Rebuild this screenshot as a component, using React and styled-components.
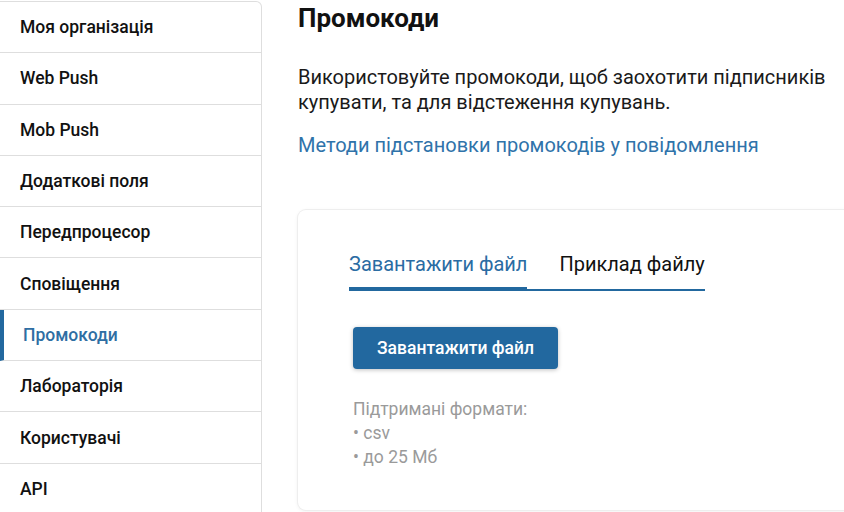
import React, { useState } from "react";
import styled, { createGlobalStyle } from "styled-components";

const GlobalStyle = createGlobalStyle`
  html, body {
    margin: 0;
    padding: 0;
    background: #fff;
  }
  body {
    font-family: Roboto, "Noto Sans", "Liberation Sans", sans-serif;
    color: #111;
  }
`;

const menuItems = [
  "Моя організація",
  "Web Push",
  "Mob Push",
  "Додаткові поля",
  "Передпроцесор",
  "Сповіщення",
  "Промокоди",
  "Лабораторія",
  "Користувачі",
  "API",
];

const App = () => {
  const [tab, setTab] = useState(0);

  return (
    <>
      <GlobalStyle />
      <Page>
        <Sidebar>
          {menuItems.map((item) => (
            <MenuItem key={item} active={item === "Промокоди"}>
              {item}
            </MenuItem>
          ))}
        </Sidebar>
        <Main>
          <Title>Промокоди</Title>
          <Description>
            Використовуйте промокоди, щоб заохотити підписників купувати, та
            для відстеження купувань.
          </Description>
          <DocLink href="#">Методи підстановки промокодів у повідомлення</DocLink>
          <Card>
            <TabList>
              <Tab active={tab === 0} onClick={() => setTab(0)}>
                Завантажити файл
              </Tab>
              <Tab active={tab === 1} onClick={() => setTab(1)}>
                Приклад файлу
              </Tab>
            </TabList>
            <Panel>
              <UploadButton>Завантажити файл</UploadButton>
              <Formats>
                Підтримані формати:
                <br />• csv
                <br />• до 25 Мб
              </Formats>
            </Panel>
          </Card>
        </Main>
      </Page>
    </>
  );
};

const Page = styled.div`
  display: flex;
  align-items: flex-start;
  width: 844px;
  height: 512px;
  overflow: hidden;
`;

const Sidebar = styled.nav`
  flex: 0 0 262px;
  box-sizing: border-box;
  margin-top: 1px;
  border: 1px solid #dedede;
  border-left: none;
  border-radius: 0 6px 0 0;
  display: flex;
  flex-direction: column;
`;

const MenuItem = styled.a`
  display: flex;
  align-items: center;
  box-sizing: border-box;
  height: 51.3px;
  padding-left: ${(p) => (p.active ? "19px" : "20px")};
  border-left: ${(p) => (p.active ? "4px solid #22689f" : "none")};
  border-bottom: 1px solid #dedede;
  font-size: 17.5px;
  font-weight: 500;
  color: ${(p) => (p.active ? "#2f6ea3" : "#111")};
  cursor: pointer;
`;

const Main = styled.main`
  flex: 1;
  padding: 3px 0 0 36px;
  min-width: 0;
`;

const Title = styled.h1`
  margin: 0;
  font-size: 26px;
  line-height: 31px;
  font-weight: 700;
  color: #111;
`;

const Description = styled.p`
  margin: 31px 0 0;
  width: 545px;
  font-size: 20px;
  line-height: 25px;
  color: #1a1a1a;
`;

const DocLink = styled.a`
  display: block;
  margin-top: 18px;
  font-size: 20px;
  line-height: 25px;
  color: #2f73aa;
  text-decoration: none;
`;

const Card = styled.section`
  margin-top: 52px;
  width: 600px;
  height: 300px;
  box-sizing: border-box;
  padding: 42px 0 0 51px;
  border-radius: 8px;
  background: #fff;
  box-shadow: 0 0 0 1px #eeeeee, 0 1px 4px rgba(0, 0, 0, 0.08);
`;

const TabList = styled.div`
  display: inline-flex;
  gap: 32px;
  border-bottom: 2px solid #22689f;
`;

const Tab = styled.button`
  position: relative;
  padding: 0 0 13px;
  border: none;
  background: none;
  font-family: inherit;
  font-size: 20px;
  line-height: 24px;
  color: ${(p) => (p.active ? "#2a6ca3" : "#111")};
  cursor: pointer;

  &::after {
    content: "";
    position: absolute;
    left: 0;
    right: 0;
    bottom: -2px;
    height: 4px;
    background: ${(p) => (p.active ? "#22689f" : "transparent")};
  }
`;

const Panel = styled.div`
  padding: 36px 0 0 4px;
`;

const UploadButton = styled.button`
  height: 42px;
  padding: 0 24px;
  border: none;
  border-radius: 4px;
  background: #22689f;
  box-shadow: 0 1px 4px rgba(0, 0, 0, 0.25);
  color: #fff;
  font-family: inherit;
  font-size: 17.5px;
  font-weight: 500;
  cursor: pointer;
`;

const Formats = styled.div`
  margin-top: 28px;
  font-size: 17.5px;
  line-height: 24px;
  color: #9a9a9a;
`;

export default App;
